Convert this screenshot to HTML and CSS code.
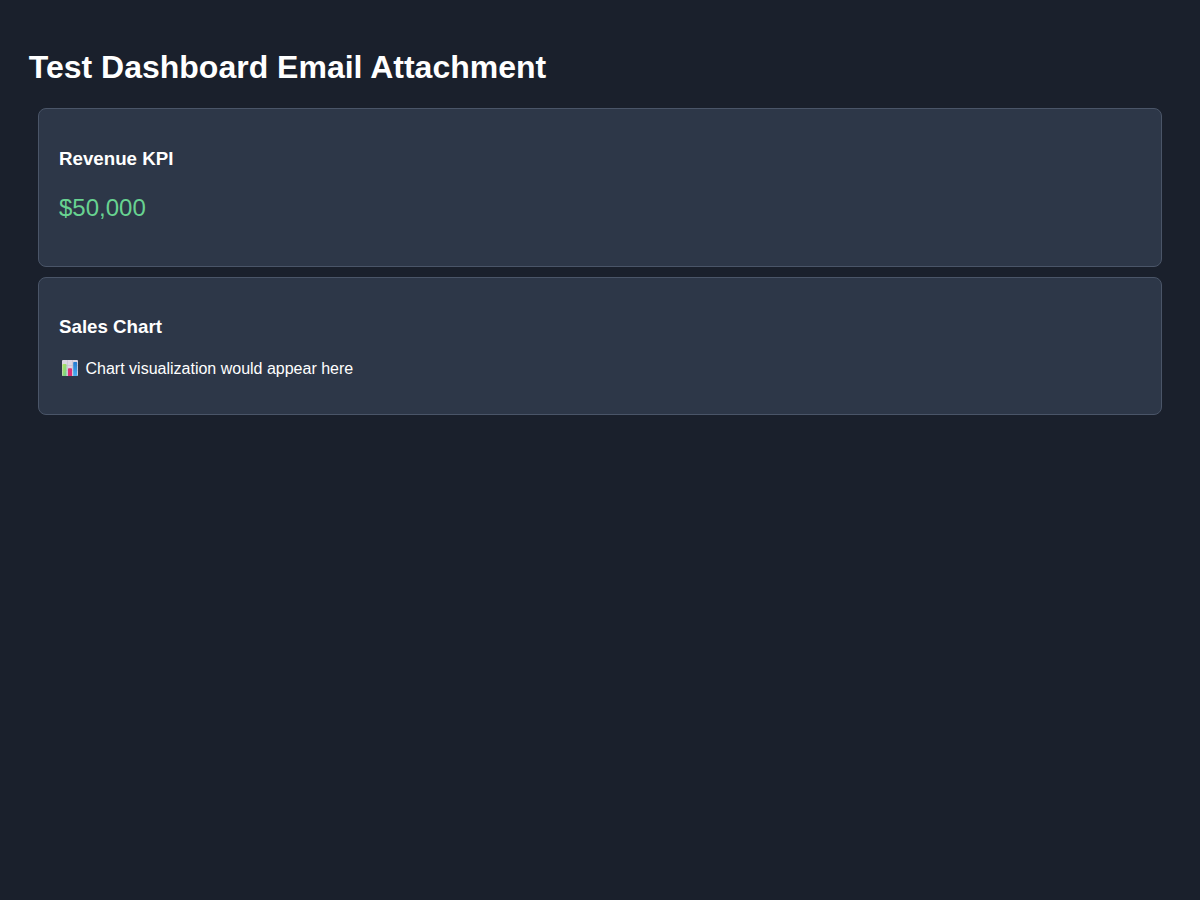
FILE: index.html
```html
<!DOCTYPE html>
<html lang="en">
<head>
<meta charset="utf-8">
<title>Test Dashboard Email Attachment</title>
<link rel="stylesheet" href="styles.css">
</head>
<body>
<main class="dashboard">
  <h1 class="title">Test Dashboard Email Attachment</h1>
  <section class="card">
    <h3 class="card-title">Revenue KPI</h3>
    <p class="value">$50,000</p>
  </section>
  <section class="card">
    <h3 class="card-title">Sales Chart</h3>
    <p class="note"><svg class="chart-icon" viewBox="0 0 16 16" aria-hidden="true">
      <defs>
        <linearGradient id="green" x2="1" y2="1"><stop stop-color="#b5e35a"/><stop offset="1" stop-color="#6ccf8c"/></linearGradient>
        <linearGradient id="blue" x2="0" y2="1"><stop stop-color="#2479cf"/><stop offset="1" stop-color="#49b0f2"/></linearGradient>
      </defs>
      <rect width="16" height="16" rx="1" fill="#dcd5e2"/>
      <path d="M0 5.5h16M0 10.5h16M5.5 0v16M10.5 0v16" stroke="#c5bdce" stroke-width=".6"/>
      <path d="M.5 16V4.8Q.5 4 1.3 4h2.4q.8 0 .8.8V16z" fill="url(#green)"/>
      <path d="M6 16V9q0-.8.8-.8h2.4q.8 0 .8.8v7z" fill="#dc2f73"/>
      <path d="M11.2 16V2.8q0-.8.8-.8h2.4q.8 0 .8.8V16z" fill="url(#blue)"/>
    </svg>Chart visualization would appear here</p>
  </section>
</main>
</body>
</html>
```
FILE: styles.css
```css
body {
  margin: 0;
  padding: 28px;
  background: #1a202c;
  color: #fff;
  font: 16px "Liberation Sans", Arial, sans-serif;
}
.title { margin: 21px 0 22px; padding-left: 0.75px; font-size: 32px; line-height: 37px; }
.card {
  margin: 10px;
  padding: 20px;
  border: 1px solid #4a5568;
  border-radius: 8px;
  background: #2d3748;
}
.card-title { margin: 18.72px 0; font-size: 18.72px; }
.value { margin: 24px 0; font-size: 24px; color: #68d391; }
.note { margin: 16px 0; padding-top: 3px; }
.chart-icon { width: 16px; height: 16px; margin: 0 7.5px 0 3px; vertical-align: -2px; }
```
